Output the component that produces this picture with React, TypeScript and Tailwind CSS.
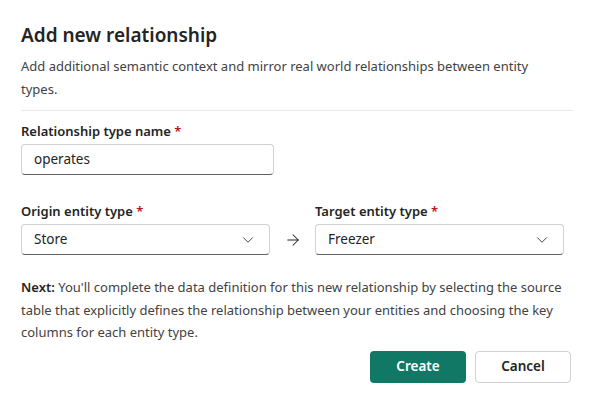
import { ChevronDown, ArrowRight } from "lucide-react";

function Label({ text }: { text: string }) {
    return (
        <p className="text-[13px] font-semibold leading-5 text-[#242424]">
            {text} <span className="text-[#c50f1f]">*</span>
        </p>
    )
}

function Select({ value }: { value: string }) {
    return (
        <div className="mt-[3px] h-[31px] w-[249px] rounded border border-[#d1d1d1] border-b-[#616161] flex items-center justify-between pl-3 pr-3 text-[13.5px] text-[#242424]">
            <span>{value}</span>
            <ChevronDown size={18} strokeWidth={1.3} className="text-[#424242]" />
        </div>
    )
}

export default function App() {
    return (
        <div className="w-[593px] h-[406px] bg-white px-[21px] pt-[21px] text-[#242424]" style={{ fontFamily: '"Noto Sans", "Open Sans", sans-serif' }}>
            <h1 className="text-[19px] font-semibold leading-7">Add new relationship</h1>
            <p className="mt-[6px] text-[13px] leading-[23px] text-[#424242] pr-[20px]">
                Add additional semantic context and mirror real world relationships between entity types.
            </p>
            <div className="mt-[9px] mr-[-1px] h-px bg-[#ebebeb]"></div>

            <div className="mt-[10px]">
                <Label text="Relationship type name" />
                <div className="mt-[3px] h-[31px] w-[253px] rounded border border-[#d1d1d1] border-b-[#616161] flex items-center px-3 text-[13.5px]">
                    operates
                </div>
            </div>

            <div className="mt-[26px] flex items-end">
                <div>
                    <Label text="Origin entity type" />
                    <Select value="Store" />
                </div>
                <div className="w-[45px] h-[31px] flex items-center justify-center">
                    <ArrowRight size={18} strokeWidth={1.4} className="text-[#242424]" />
                </div>
                <div>
                    <Label text="Target entity type" />
                    <Select value="Freezer" />
                </div>
            </div>

            <p className="mt-[21px] text-[13px] leading-[22.5px] text-[#424242]">
                <span className="font-semibold text-[#242424]">Next:</span> You'll complete the data definition for this new relationship by selecting the source table that explicitly defines the relationship between your entities and choosing the key columns for each entity type.
            </p>

            <div className="mt-[7px] flex justify-end gap-[9px] pr-[1px]">
                <button className="h-[32px] w-[96px] rounded bg-[#117865] text-white text-[13.5px] font-semibold">Create</button>
                <button className="h-[32px] w-[96px] rounded border border-[#d1d1d1] bg-white text-[#242424] text-[13.5px] font-semibold">Cancel</button>
            </div>
        </div>
    )
}
